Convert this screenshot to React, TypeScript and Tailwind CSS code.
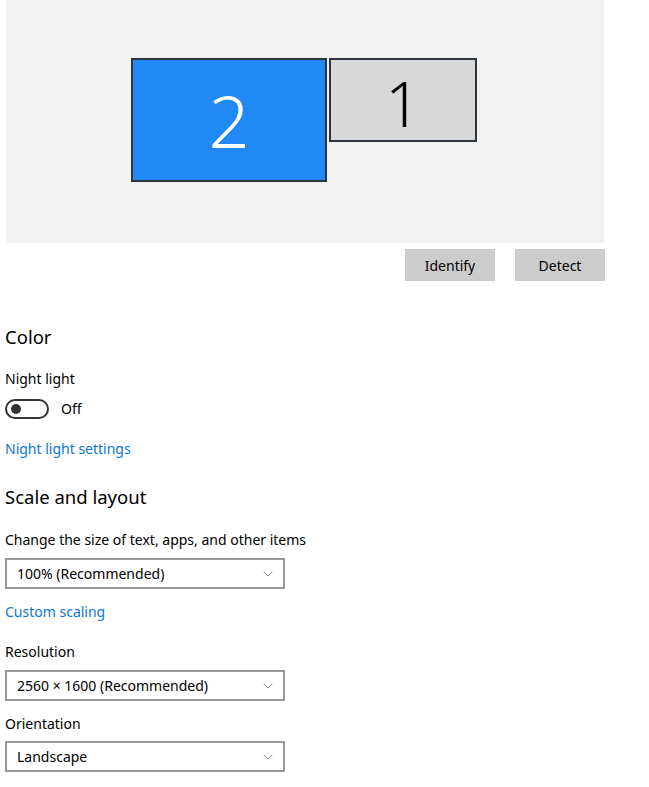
import { ChevronDown } from "lucide-react";

function Monitor({
  label,
  className,
  numberClass,
}: {
  label: string;
  className: string;
  numberClass: string;
}) {
  return (
    <div className={`absolute flex items-center justify-center border-2 border-[#2b3540] ${className}`}>
      <span className={`font-light leading-none ${numberClass}`}>{label}</span>
    </div>
  );
}

function Dropdown({ value }: { value: string }) {
  return (
    <div className="flex h-[31px] w-[280px] items-center justify-between border-2 border-[#999999] bg-white pl-[10px] pr-[7px] text-[14px] text-black">
      <span>{value}</span>
      <ChevronDown size={16} strokeWidth={1} className="text-[#555]" />
    </div>
  );
}

export default function App() {
  return (
    <div className="h-[787px] w-[649px] overflow-hidden bg-white font-['Noto_Sans',sans-serif] text-black">
      {/* monitor arrangement */}
      <div className="relative ml-[6px] h-[243px] w-[598px] bg-[#f2f2f2]">
        <Monitor
          label="2"
          className="left-[125px] top-[58px] h-[124px] w-[196px] bg-[#2089f6]"
          numberClass="text-[72px] text-white"
        />
        <Monitor
          label="1"
          className="left-[323px] top-[58px] h-[84px] w-[148px] items-start bg-[#d9d9d9] pt-[12px]"
          numberClass="text-[62px] text-black"
        />
      </div>
      <div className="mt-[6px] flex w-[605px] justify-end gap-[20px]">
        <button className="h-[32px] w-[90px] bg-[#cccccc] text-[14px]">Identify</button>
        <button className="h-[32px] w-[90px] bg-[#cccccc] text-[14px]">Detect</button>
      </div>

      <div className="pl-[5px] text-[14px]">
        <h2 className="mt-[43px] text-[18.5px] leading-[26px]">Color</h2>
        <div className="mt-[19px] leading-[20px]">Night light</div>
        <div className="mt-[9px] flex items-center gap-[12px]">
          <div className="flex h-[20px] w-[44px] items-center rounded-full border-2 border-[#333] pl-[4px]">
            <div className="h-[10px] w-[10px] rounded-full bg-[#333]" />
          </div>
          <span>Off</span>
        </div>
        <div className="mt-[20px] leading-[20px] text-[#0a78d7]">Night light settings</div>

        <h2 className="mt-[25px] text-[18.5px] leading-[26px]">Scale and layout</h2>
        <div className="mt-[20px] leading-[20px]">Change the size of text, apps, and other items</div>
        <div className="mt-[8px]">
          <Dropdown value="100% (Recommended)" />
        </div>
        <div className="mt-[13px] leading-[20px] text-[#0a78d7]">Custom scaling</div>
        <div className="mt-[20px] leading-[20px]">Resolution</div>
        <div className="mt-[8px]">
          <Dropdown value="2560 × 1600 (Recommended)" />
        </div>
        <div className="mt-[13px] leading-[20px]">Orientation</div>
        <div className="mt-[7px]">
          <Dropdown value="Landscape" />
        </div>
      </div>
    </div>
  );
}
